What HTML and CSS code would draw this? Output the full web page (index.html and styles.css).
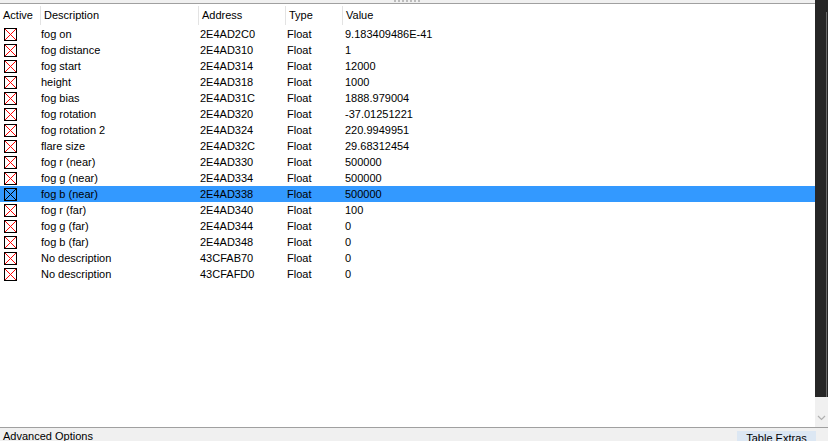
FILE: index.html
```html
<html>
    <head>
        <title>Cheat Table</title>
        <link rel="stylesheet" href="styles.css">
    </head>
    <body>
        <div class="window">
            <div class="main">
                <div class="left">
                    <div class="splitter"><span class="grip"></span></div>
                    <div class="list">
                        <div class="header">
                            <span class="h first">Active</span>
                            <span class="h">Description</span>
                            <span class="h">Address</span>
                            <span class="h">Type</span>
                            <span class="h">Value</span>
                        </div>
                        <div id="rows"></div>
                    </div>
                </div>
                <div class="side">
                    <div class="dark"><div class="edge"></div></div>
                    <div class="scroll">
                        <svg width="9" height="6" viewBox="0 0 9 6"><path d="M1 1 L4.5 4.5 L8 1" fill="none" stroke="#b0b0b0" stroke-width="1.2"/></svg>
                    </div>
                </div>
            </div>
            <div class="bottom">
                <span class="adv">Advanced Options</span>
                <span class="extras">Table Extras</span>
            </div>
        </div>
        <script>
            let entries = [
                ['fog on', '2E4AD2C0', '9.183409486E-41'],
                ['fog distance', '2E4AD310', '1'],
                ['fog start', '2E4AD314', '12000'],
                ['height', '2E4AD318', '1000'],
                ['fog bias', '2E4AD31C', '1888.979004'],
                ['fog rotation', '2E4AD320', '-37.01251221'],
                ['fog rotation 2', '2E4AD324', '220.9949951'],
                ['flare size', '2E4AD32C', '29.68312454'],
                ['fog r (near)', '2E4AD330', '500000'],
                ['fog g (near)', '2E4AD334', '500000'],
                ['fog b (near)', '2E4AD338', '500000'],
                ['fog r (far)', '2E4AD340', '100'],
                ['fog g (far)', '2E4AD344', '0'],
                ['fog b (far)', '2E4AD348', '0'],
                ['No description', '43CFAB70', '0'],
                ['No description', '43CFAFD0', '0'],
            ];
            let selected = 10;
            let rows = document.querySelector('#rows');
            let html = '';
            for (let i = 0; i < entries.length; i++) {
                let e = entries[i];
                let cls = i === selected ? 'x dark-x' : 'x';
                html += '<div class="row' + (i === selected ? ' selected' : '') + '">'
                    + '<span class="c first"><svg class="box" width="13" height="13" viewBox="0 0 13 13" shape-rendering="crispEdges">'
                    + '<rect x="0.5" y="0.5" width="12" height="12" fill="none" stroke="#000"/>'
                    + '<path class="' + cls + '" d="M1 1 L12 12 M12 1 L1 12"/></svg></span>'
                    + '<span class="c">' + e[0] + '</span>'
                    + '<span class="c">' + e[1] + '</span>'
                    + '<span class="c">Float</span>'
                    + '<span class="c">' + e[2] + '</span>'
                    + '</div>';
            }
            rows.innerHTML = html;
        </script>
    </body>
</html>
```
FILE: styles.css
```css
* {
    font-family: 'Liberation Sans', Arial, sans-serif;
    box-sizing: border-box;
}
body {
    margin: 0;
    width: 828px;
    height: 441px;
    overflow: hidden;
    background-color: #fff;
    font-size: 11px;
    color: #000;
}
.window {
    display: flex;
    flex-direction: column;
    height: 441px;
}
.main {
    display: flex;
    height: 427px;
    flex-shrink: 0;
}
.left {
    width: 815px;
    flex-shrink: 0;
    display: flex;
    flex-direction: column;
}
.splitter {
    height: 4px;
    background-color: #f0f0f0;
    border-bottom: 1px solid #a0a0a0;
    display: flex;
    justify-content: center;
}
.grip {
    width: 28px;
    height: 2px;
    background-image: repeating-linear-gradient(90deg, #bcbcbc 0 2px, transparent 2px 4px);
}
.list {
    flex-grow: 1;
}
.header, .row {
    display: grid;
    grid-template-columns: 40px 158px 87px 57px 1fr;
    height: 16px;
    line-height: 16px;
    white-space: nowrap;
}
.header {
    height: 22px;
    padding-top: 2px;
}
.h {
    border-left: 1px solid #e3e3e3;
    padding-left: 3px;
    line-height: 18px;
    height: 19px;
}
.h.first {
    border-left: 0;
    padding-left: 3px;
}
.c {
    padding-left: 1px;
}
.c:nth-child(3) {
    padding-left: 2px;
}
.c:nth-child(4) {
    padding-left: 2px;
}
.c:nth-child(5) {
    padding-left: 3px;
}
.c.first {
    padding-left: 4px;
    display: flex;
    align-items: center;
}
.box {
    display: block;
}
.x {
    stroke: #ff0000;
    stroke-width: 1;
    fill: none;
}
.dark-x {
    stroke: #000;
}
.selected {
    background-color: #3399ff;
}
.side {
    width: 13px;
    flex-shrink: 0;
    display: flex;
    flex-direction: column;
}
.dark {
    flex-grow: 1;
    background-color: #262626;
    padding-top: 12px;
    padding-left: 11px;
}
.edge {
    height: 100%;
    border-left: 1px solid #6a6a6a;
}
.scroll {
    height: 30px;
    background-color: #f0f0f0;
    display: flex;
    align-items: flex-end;
    justify-content: center;
    padding-bottom: 6px;
}
.bottom {
    height: 14px;
    flex-shrink: 0;
    border-top: 1px solid #a0a0a0;
    background-color: #f0f0f0;
    display: flex;
    justify-content: space-between;
    overflow: hidden;
}
.adv {
    padding-left: 3px;
    line-height: 16px;
}
.extras {
    width: 79px;
    margin-right: 12px;
    margin-top: 3px;
    background-color: #dce7f3;
    text-align: center;
    line-height: 14px;
}
```
